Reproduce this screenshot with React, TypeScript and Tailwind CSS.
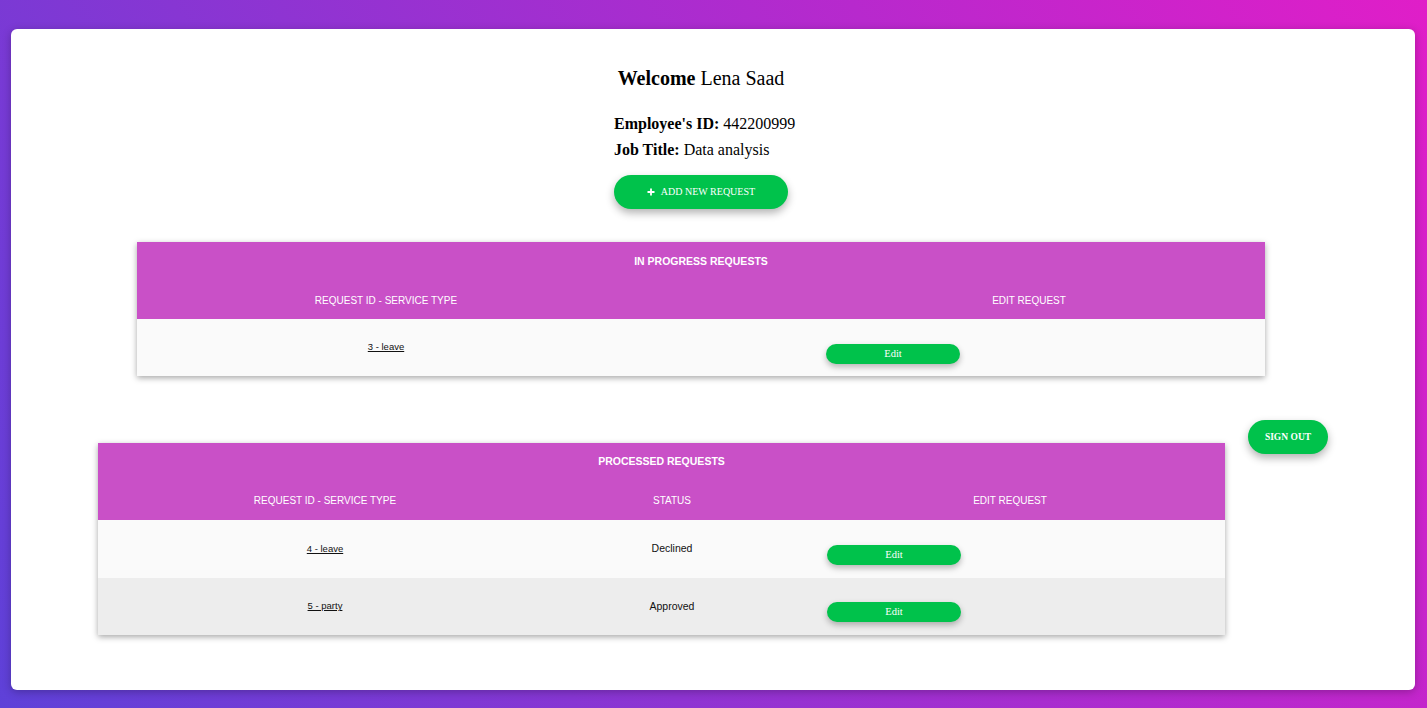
import React from "react";

const serif = "font-['Liberation_Serif','Times_New_Roman',serif]";
const sans = "font-['Liberation_Sans',Arial,sans-serif]";

function EditButton({ className = "" }: { className?: string }) {
  return (
    <button
      className={`${serif} h-[20px] w-[134px] rounded-full bg-[#00c24b] text-[10.5px] text-white shadow-[0_3px_6px_rgba(0,0,0,0.28)] ${className}`}
    >
      Edit
    </button>
  );
}

export default function App() {
  return (
    <div className="min-h-screen w-full overflow-hidden bg-[linear-gradient(60deg,#5e41d8,#e01ec8)] pt-[29px]">
      <div className="ml-[11px] flex h-[661px] w-[1404px] flex-col rounded-[6px] bg-white pt-[38px] shadow-[0_2px_8px_rgba(0,0,0,0.25)]">
        <div className="flex flex-col items-center pr-[24px]">
          <h2 className={`${serif} text-center text-[20px] leading-[23px] text-black`}>
            <b>Welcome</b> Lena Saad
          </h2>

          <div className={`${serif} mt-[21px] w-[174px] whitespace-nowrap text-[16px] leading-[26px] text-black`}>
            <div>
              <b>Employee's ID:</b> 442200999
            </div>
            <div>
              <b>Job Title:</b> Data analysis
            </div>
            <button className="mt-[12px] flex h-[34px] w-[174px] items-center justify-center gap-[6px] rounded-full bg-[#00c24b] text-white shadow-[0_4px_8px_rgba(0,0,0,0.3)]">
              <svg width="8" height="8" viewBox="0 0 8 8" className="-mt-[1px]">
                <path d="M4 0.5v7M0.5 4h7" stroke="white" strokeWidth="1.8" />
              </svg>
              <span className="text-[10px] leading-none">ADD NEW REQUEST</span>
            </button>
          </div>
        </div>

        {/* In progress table */}
        <div className={`${sans} ml-[126px] mt-[33px] w-[1128px] shadow-[0_2px_6px_rgba(0,0,0,0.35)]`}>
          <div className="bg-[#c950c7] text-white">
            <div className="flex h-[39px] items-center justify-center text-[10.5px] font-bold">
              IN PROGRESS REQUESTS
            </div>
            <div className="grid h-[38px] grid-cols-[498px_158px_472px] items-center text-[10px]">
              <div className="text-center">REQUEST ID - SERVICE TYPE</div>
              <div />
              <div className="text-center">EDIT REQUEST</div>
            </div>
          </div>
          <div className="grid h-[57px] grid-cols-[498px_191px_1fr] items-center bg-[#fafafa] text-[10.5px] text-[#111]">
            <div className="text-center text-[9.5px]">
              <a className="underline">3 - leave</a>
            </div>
            <div />
            <div className="mt-[12px] flex">
              <EditButton className="w-[133px]" />
            </div>
          </div>
        </div>

        {/* Processed + sign out */}
        <div className="ml-[87px] mt-[44px] flex items-start gap-[23px]">
          <div className={`${sans} mt-[23px] w-[1127px] shadow-[0_2px_6px_rgba(0,0,0,0.35)]`}>
            <div className="bg-[#c950c7] text-white">
              <div className="flex h-[38px] items-center justify-center text-[10.5px] font-bold">
                PROCESSED REQUESTS
              </div>
              <div className="grid h-[39px] grid-cols-[454px_240px_1fr] items-center text-[10px]">
                <div className="text-center">REQUEST ID - SERVICE TYPE</div>
                <div className="text-center">STATUS</div>
                <div className="pl-[3px] text-center">EDIT REQUEST</div>
              </div>
            </div>
            <div className="grid h-[58px] grid-cols-[454px_240px_1fr] items-center bg-[#fafafa] text-[10.5px] text-[#111]">
              <div className="text-center text-[9.5px]">
                <a className="underline">4 - leave</a>
              </div>
              <div className="text-center">Declined</div>
              <div className="mt-[11px] flex pl-[35px]">
                <EditButton />
              </div>
            </div>
            <div className="grid h-[57px] grid-cols-[454px_240px_1fr] items-center bg-[#ededed] text-[10.5px] text-[#111]">
              <div className="text-center text-[9.5px]">
                <a className="underline">5 - party</a>
              </div>
              <div className="text-center">Approved</div>
              <div className="mt-[11px] flex pl-[35px]">
                <EditButton />
              </div>
            </div>
          </div>
          <button
            className={`${serif} h-[34px] w-[80px] rounded-full bg-[#00c24b] text-[9.5px] font-bold text-white shadow-[0_4px_8px_rgba(0,0,0,0.3)]`}
          >
            SIGN OUT
          </button>
        </div>
      </div>
    </div>
  );
}
